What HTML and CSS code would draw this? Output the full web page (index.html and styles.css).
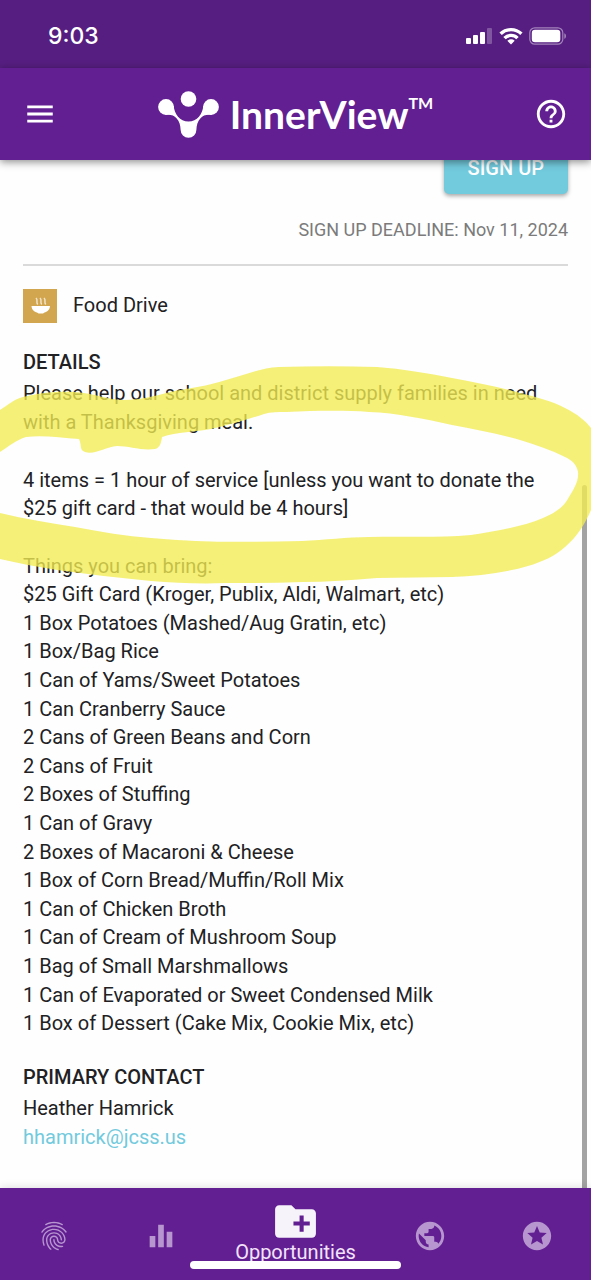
FILE: index.html
```html
<!DOCTYPE html>
<html lang="en">
<head>
<meta charset="utf-8">
<meta name="viewport" content="width=device-width, initial-scale=1">
<title>InnerView – Opportunity</title>
<link rel="stylesheet" href="styles.css">
</head>
<body>
<div class="status-bar">
  <span class="clock">9:03</span>
  <div class="status-icons">
    <svg class="signal" viewBox="0 0 27 18" fill="#fff" aria-hidden="true"><rect x="0" y="11" width="5" height="6" rx="1"/><rect x="7" y="8" width="5" height="9" rx="1"/><rect x="14" y="5" width="5" height="12" rx="1"/><rect x="21" y="1" width="5" height="16" rx="1" opacity=".25"/></svg>
    <svg class="wifi" viewBox="0 0 24 18" aria-hidden="true"><g fill="none" stroke="#fff" stroke-width="3.4"><path d="M1.6 6.8a15 15 0 0 1 20.8 0"/><path d="M5.5 11.1a9.2 9.2 0 0 1 13 0"/></g><path fill="#fff" d="M8.3 13.8a5.4 5.4 0 0 1 7.4 0L12 17.6z"/></svg>
    <svg class="battery" viewBox="0 0 38 18" aria-hidden="true"><rect x=".8" y=".8" width="33" height="16.4" rx="5" fill="none" stroke="#fff" stroke-opacity=".45" stroke-width="1.2"/><rect x="2.8" y="2.8" width="28.5" height="12.4" rx="3.2" fill="#fff"/><path d="M35.4 6.2c2 .6 2 5 0 5.6z" fill="#fff" opacity=".5"/></svg>
  </div>
</div>
<header class="app-bar">
  <button class="icon-button" type="button" aria-label="Menu"><svg class="icon" viewBox="0 0 24 24"><path d="M3 18h18v-2H3v2zm0-5h18v-2H3v2zm0-7v2h18V6H3z"/></svg></button>
  <div class="brand">
    <svg class="brand-mark" viewBox="0 0 62 47" fill="#fff" aria-hidden="true"><circle cx="30.5" cy="8" r="7.8"/><circle cx="8" cy="16" r="7.900"/><circle cx="53" cy="16" r="7.900"/><path d="M15.800 14.500C16 23 22 30.600 30.500 30.600S45 23 45.200 14.500L54 23.900C48 23.400 45 24.400 42.500 27.200C39.500 30.500 38.600 34 38.400 38.800A7.900 7.900 0 0 1 22.600 38.800C22.400 34 21.500 30.500 18.500 27.200C16 24.400 13 23.400 7 23.900Z"/></svg>
    <span class="brand-name">InnerView</span><sup class="brand-tm">TM</sup>
  </div>
  <button class="icon-button" type="button" aria-label="Help"><svg class="icon" viewBox="0 0 24 24"><path d="M11 18h2v-2h-2v2zm1-16C6.480 2 2 6.480 2 12s4.480 10 10 10 10-4.480 10-10S17.520 2 12 2zm0 18c-4.410 0-8-3.590-8-8s3.590-8 8-8 8 3.590 8 8-3.590 8-8 8zm0-14c-2.210 0-4 1.790-4 4h2c0-1.100.9-2 2-2s2 .9 2 2c0 2-3 1.750-3 5h2c0-2.250 3-2.500 3-5 0-2.210-1.790-4-4-4z"/></svg></button>
</header>
<main class="content">
  <section class="signup">
    <button class="signup-button" type="button">SIGN UP</button>
    <p class="deadline">SIGN UP DEADLINE: Nov 11, 2024</p>
  </section>
  <div class="category">
    <svg class="category-icon" viewBox="0 0 34 34" aria-hidden="true"><rect width="34" height="34" fill="#d2a64f"/><path d="M8.500 17h18.500c-.3 4.200-3 5.900-5.500 6.600l-1.500 1h-4.500l-1.500-1c-2.500-.7-5.200-2.400-5.500-6.600z" fill="#fff"/><path d="M13 9c2.500 2.500-.5 3.500 1.700 6.500M17 9c2.500 2.500-.5 3.500 1.700 6.500M21 9c2.500 2.500-.5 3.500 1.700 6.500" fill="none" stroke="#fff" stroke-opacity=".7" stroke-width="1.500"/></svg>
    <span>Food Drive</span>
  </div>
  <section class="section">
    <h2 class="heading">DETAILS</h2>
    <p class="paragraph">Please help our school and district supply families in need with a Thanksgiving meal.</p>
    <p class="paragraph">4 items = 1 hour of service [unless you want to donate the $25 gift card - that would be 4 hours]</p>
    <p>Things you can bring:</p>
    <ul class="items">
      <li>$25 Gift Card (Kroger, Publix, Aldi, Walmart, etc)</li>
      <li>1 Box Potatoes (Mashed/Aug Gratin, etc)</li>
      <li>1 Box/Bag Rice</li>
      <li>1 Can of Yams/Sweet Potatoes</li>
      <li>1 Can Cranberry Sauce</li>
      <li>2 Cans of Green Beans and Corn</li>
      <li>2 Cans of Fruit</li>
      <li>2 Boxes of Stuffing</li>
      <li>1 Can of Gravy</li>
      <li>2 Boxes of Macaroni &amp; Cheese</li>
      <li>1 Box of Corn Bread/Muffin/Roll Mix</li>
      <li>1 Can of Chicken Broth</li>
      <li>1 Can of Cream of Mushroom Soup</li>
      <li>1 Bag of Small Marshmallows</li>
      <li>1 Can of Evaporated or Sweet Condensed Milk</li>
      <li>1 Box of Dessert (Cake Mix, Cookie Mix, etc)</li>
    </ul>
  </section>
  <section class="section">
    <h2 class="heading">PRIMARY CONTACT</h2>
    <p>Heather Hamrick</p>
    <p><a class="link" href="mailto:hhamrick@jcss.us">hhamrick@jcss.us</a></p>
  </section>
  <div class="scroll-thumb"></div>
  <svg class="marker" viewBox="0 350 591 250" aria-hidden="true"><path d="M0 410C8 405 14 399 23 397C42 392 58 391 75 392C94 393 108 400 124 400C140 400 155 396 170 392C190 388 208 386 226 380C244 375 260 368 279 367C312 366 345 366 377 367C402 369 428 373 452 378C475 382 498 387 520 393C536 397 552 401 565 408C577 414 586 421 591 428V510C585 524 577 537 565 547C555 556 542 562 528 566C504 573 478 576 452 577C427 577 402 578 377 578C352 580 327 582 302 582C277 583 252 583 226 583C201 584 176 583 151 581C119 578 88 574 57 570C38 567 18 563 0 559V513C25 519 50 523 75 527C101 532 126 536 151 538C201 543 252 542 302 541C325 540 347 537 369 537C403 536 437 538 471 535C496 531 522 527 543 518C555 513 564 507 569 497C574 489 579 481 578 472C577 465 572 460 565 457C551 450 536 445 520 440C498 434 475 429 452 425C425 419 397 413 369 412C341 410 314 411 286 412C278 412 271 412 264 414C246 420 229 425 211 429C195 432 177 432 162 437C161 443 160 448 155 449C142 451 129 446 117 446C105 447 95 455 85 452C79 450 82 445 79 439C61 438 44 435 26 437C16 440 8 447 0 452Z"/></svg>
</main>
<nav class="bottom-nav">
  <a class="tab" href="#profile" aria-label="Profile"><svg class="tab-icon" viewBox="0 0 24 24"><path d="M17.81 4.47c-.08 0-.16-.02-.23-.06C15.66 3.42 14 3 12.01 3c-1.98 0-3.86.47-5.57 1.41-.24.13-.54.04-.68-.2-.13-.24-.04-.55.2-.68C7.82 2.52 9.86 2 12.01 2c2.13 0 3.99.47 6.03 1.52.25.13.34.43.21.67-.09.18-.26.28-.44.28zM3.5 9.72c-.1 0-.2-.03-.29-.09-.23-.16-.28-.47-.12-.7.99-1.4 2.25-2.5 3.75-3.27C9.98 4.04 14 4.03 17.15 5.65c1.5.77 2.76 1.86 3.75 3.25.16.22.11.54-.12.7-.23.16-.54.11-.7-.12-.9-1.26-2.04-2.25-3.39-2.94-2.87-1.47-6.54-1.47-9.4.01-1.36.7-2.5 1.7-3.4 2.96-.08.14-.23.21-.39.21zm6.25 12.07c-.13 0-.26-.05-.35-.15-.87-.87-1.34-1.43-2.01-2.64-.69-1.23-1.05-2.73-1.05-4.34 0-2.97 2.54-5.39 5.66-5.39s5.66 2.42 5.66 5.39c0 .28-.22.5-.5.5s-.5-.22-.5-.5c0-2.42-2.09-4.39-4.66-4.39-2.57 0-4.66 1.97-4.66 4.39 0 1.44.32 2.77.93 3.85.64 1.15 1.08 1.64 1.85 2.42.19.2.19.51 0 .71-.11.1-.24.15-.37.15zm7.17-1.85c-1.19 0-2.24-.3-3.1-.89-1.49-1.01-2.38-2.65-2.38-4.39 0-.28.22-.5.5-.5s.5.22.5.5c0 1.41.72 2.74 1.94 3.56.71.48 1.54.71 2.54.71.24 0 .64-.03 1.04-.1.27-.05.53.13.58.41.05.27-.13.53-.41.58-.57.11-1.07.12-1.21.12zM14.91 22c-.04 0-.09-.01-.13-.02-1.59-.44-2.63-1.03-3.72-2.1-1.4-1.39-2.17-3.24-2.17-5.22 0-1.62 1.38-2.94 3.08-2.94 1.7 0 3.08 1.32 3.08 2.94 0 1.07.93 1.94 2.08 1.94s2.08-.87 2.08-1.94c0-3.77-3.25-6.83-7.25-6.83-2.84 0-5.44 1.58-6.61 4.03-.39.81-.59 1.76-.59 2.8 0 .78.07 2.01.67 3.61.1.26-.03.55-.29.64-.26.1-.55-.04-.64-.29-.49-1.31-.73-2.61-.73-3.96 0-1.2.23-2.29.68-3.24 1.33-2.79 4.28-4.6 7.51-4.6 4.55 0 8.25 3.51 8.25 7.83 0 1.62-1.38 2.94-3.08 2.94s-3.08-1.32-3.08-2.94c0-1.07-.93-1.94-2.08-1.94s-2.08.87-2.08 1.94c0 1.71.66 3.31 1.87 4.51.95.94 1.86 1.46 3.27 1.85.27.07.42.35.35.61-.05.23-.26.38-.47.38z"/></svg></a>
  <a class="tab" href="#stats" aria-label="Stats"><svg class="tab-icon" viewBox="0 0 24 24"><path d="M10 20h4V4h-4v16zm-6 0h4v-8H4v8zM16 9v11h4V9h-4z"/></svg></a>
  <a class="tab tab-active" href="#opportunities" aria-current="page"><svg class="tab-icon" viewBox="0 0 24 24"><path d="M20 6h-8l-2-2H4c-1.110 0-1.990.89-1.990 2L2 18c0 1.110.89 2 2 2h16c1.110 0 2-.89 2-2V8c0-1.110-.89-2-2-2zm-1 8h-3v3h-2v-3h-3v-2h3V9h2v3h3v2z"/></svg><span>Opportunities</span></a>
  <a class="tab" href="#explore" aria-label="Explore"><svg class="tab-icon" viewBox="0 0 24 24"><path d="M12 2C6.480 2 2 6.480 2 12s4.480 10 10 10 10-4.480 10-10S17.520 2 12 2zm-1 17.930c-3.950-.49-7-3.850-7-7.930 0-.62.080-1.210.21-1.790L9 15v1c0 1.100.9 2 2 2v1.930zm6.900-2.540c-.26-.81-1-1.390-1.900-1.390h-1v-3c0-.55-.45-1-1-1H8v-2h2c.55 0 1-.45 1-1V7h2c1.100 0 2-.9 2-2v-.41c2.930 1.190 5 4.060 5 7.410 0 2.080-.8 3.970-2.100 5.390z"/></svg></a>
  <a class="tab" href="#favorites" aria-label="Favorites"><svg class="tab-icon" viewBox="0 0 24 24"><path d="M11.990 2C6.470 2 2 6.480 2 12s4.470 10 9.990 10C17.520 22 22 17.520 22 12S17.520 2 11.990 2zm4.240 16L12 15.450 7.770 18l1.120-4.810-3.730-3.230 4.920-.42L12 5l1.920 4.530 4.920.42-3.730 3.230L16.230 18z"/></svg></a>
  <div class="home-indicator"></div>
</nav>
</body>
</html>
```
FILE: styles.css
```css
* {
  box-sizing: border-box;
}

body {
  margin: 0;
  min-height: 100vh;
  display: flex;
  flex-direction: column;
  background: #fefefe;
  color: #212124;
  font-family: Roboto, "Liberation Sans", sans-serif;
  font-size: 20px;
  line-height: 1.43;
}

p,
h2,
ul {
  margin: 0;
  padding: 0;
}

button {
  border: 0;
  padding: 0;
  font: inherit;
  cursor: pointer;
}

.status-bar {
  display: flex;
  align-items: center;
  justify-content: space-between;
  height: 68px;
  padding: 4px 24px 0 48px;
  background: #561e81;
  color: #fff;
}

.clock {
  font-family: Inter, sans-serif;
  font-size: 23px;
  font-weight: 500;
}

.status-icons {
  display: flex;
  align-items: center;
  gap: 6px;
}

.signal {
  width: 27px;
  height: 18px;
}

.wifi {
  width: 24px;
  height: 18px;
}

.battery {
  width: 38px;
  height: 18px;
}

.app-bar {
  position: relative;
  z-index: 2;
  display: flex;
  align-items: center;
  justify-content: space-between;
  height: 92px;
  padding: 0 23px;
  background: #621f92;
  color: #fff;
  box-shadow: 0 2px 8px rgba(0, 0, 0, 0.45);
}

.icon-button {
  display: flex;
  background: none;
  color: inherit;
}

.icon {
  width: 34px;
  height: 34px;
  fill: currentColor;
}

.brand {
  display: flex;
  align-items: center;
}

.brand-mark {
  width: 62px;
  height: 47px;
  margin-right: 10px;
}

.brand-name {
  font-family: Lato, sans-serif;
  font-size: 39px;
  font-weight: 700;
  line-height: 44px;
}

.brand-tm {
  align-self: flex-start;
  font-family: Lato, sans-serif;
  font-size: 16px;
  font-weight: 700;
  line-height: 24px;
}

.content {
  position: relative;
  flex: 1;
  padding: 0 23px;
}

.signup {
  display: flex;
  flex-direction: column;
  align-items: flex-end;
  margin-top: -18px;
  padding-bottom: 21px;
  border-bottom: 2px solid #dadada;
}

.signup-button {
  height: 52px;
  padding: 0 24px;
  border-radius: 5px;
  background: #72cadd;
  color: #fff;
  font-weight: 500;
  box-shadow: 0 2px 4px rgba(0, 0, 0, 0.35);
}

.deadline {
  margin-top: 23px;
  color: #7b7b7b;
  font-size: 18px;
}

.category {
  display: flex;
  align-items: center;
  gap: 16px;
  margin-top: 23px;
}

.category-icon {
  width: 34px;
  height: 34px;
}

.section {
  margin-top: 25px;
}

.heading {
  margin-bottom: 3px;
  font-size: 20px;
  font-weight: 500;
}

.paragraph {
  margin-bottom: 29px;
}

.items {
  list-style: none;
}

.link {
  color: #72cadd;
  text-decoration: none;
}

.scroll-thumb {
  position: absolute;
  top: 325px;
  right: 4px;
  bottom: 0;
  width: 5px;
  border-radius: 3px 3px 0 0;
  background: #a3a3a3;
}

.marker {
  position: absolute;
  top: 190px;
  left: 0;
  width: 100%;
  fill: #f2ec52;
  fill-opacity: 0.78;
  pointer-events: none;
}

.bottom-nav {
  position: relative;
  display: grid;
  grid-template-columns: 2fr 2fr 3fr 2fr 2fr;
  height: 92px;
  background: #621f92;
  box-shadow: 0 -1px 8px rgba(0, 0, 0, 0.12);
}

.tab {
  display: flex;
  flex-direction: column;
  align-items: center;
  justify-content: center;
  padding-top: 3px;
  color: #b795cf;
  text-decoration: none;
}

.tab-icon {
  width: 34px;
  height: 34px;
  fill: currentColor;
}

.tab-active {
  justify-content: flex-start;
  padding-top: 9px;
  color: #f3e3fb;
  line-height: 24px;
}

.tab-active .tab-icon {
  width: 49px;
  height: 49px;
  margin-bottom: -6px;
  fill: #f7f3fa;
}

.home-indicator {
  position: absolute;
  left: 50%;
  bottom: 11px;
  width: 211px;
  height: 8px;
  margin-left: -106px;
  border-radius: 4px;
  background: #fff;
}
```
